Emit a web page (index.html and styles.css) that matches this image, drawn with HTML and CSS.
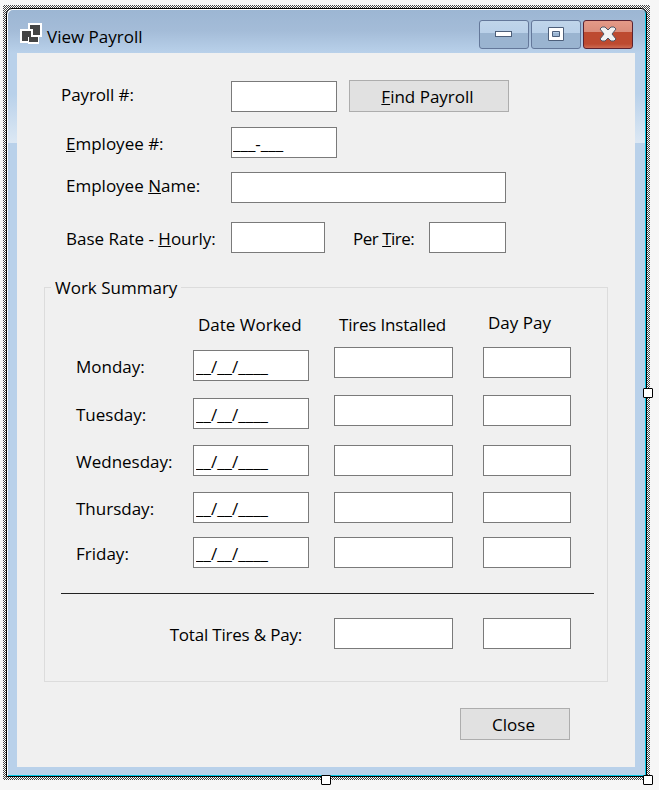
FILE: index.html
```html
<!DOCTYPE html>
<html lang="en">

<head>
    <meta charset="UTF-8">
    <title>View Payroll</title>
    <link rel="stylesheet" href="styles.css">
</head>

<body>
    <div class="selection">
        <div class="window">
            <div class="titlebar">
                <svg class="app-icon" width="22" height="21" viewBox="0 0 22 21">
                    <rect x="8" y="0" width="14" height="14" fill="#fff"/>
                    <rect x="10" y="2" width="10" height="10" fill="#444"/>
                    <rect x="0" y="6" width="13" height="14" fill="#fff"/>
                    <rect x="2" y="8" width="9" height="10" fill="#444"/>
                    <rect x="8" y="14" width="11" height="7" fill="#fff"/>
                    <rect x="9" y="14" width="9" height="5" fill="#444"/>
                </svg>
                <span class="title">View Payroll</span>
                <div class="caption-buttons">
                    <div class="caption-btn">
                        <svg width="18" height="8" viewBox="0 0 18 8"><rect x="0.5" y="1.5" width="16" height="5" fill="#fff" stroke="#4d5f7a"/></svg>
                    </div>
                    <div class="caption-btn">
                        <svg width="18" height="16" viewBox="0 0 18 16"><path d="M1.5 1.5h15v13h-15z M5.5 5.5v5h7v-5z" fill="#fff" fill-rule="evenodd" stroke="#4d5f7a"/></svg>
                    </div>
                    <div class="caption-btn close">
                        <svg width="18" height="16" viewBox="0 0 18 16"><path d="M1 3 3 1h3l3 3 3-3h3l2 2-4 5 4 5-2 2h-3l-3-3-3 3H3l-2-2 4-5z" fill="#f2f2f2" stroke="#4f5666"/></svg>
                    </div>
                </div>
            </div>

            <div class="client">
                <div class="row row-payroll">
                    <label class="lbl lbl-first">Payroll #:</label>
                    <input class="field w-106" type="text">
                    <button class="btn btn-find"><u>F</u>ind Payroll</button>
                </div>
                <div class="row row-employee">
                    <label class="lbl lbl-down"><u>E</u>mployee #:</label>
                    <input class="field w-106" type="text" value="___-___">
                </div>
                <div class="row row-name">
                    <label class="lbl lbl-up">Employee <u>N</u>ame:</label>
                    <input class="field w-275" type="text">
                </div>
                <div class="row row-rate">
                    <label class="lbl lbl-down">Base Rate - <u>H</u>ourly:</label>
                    <input class="field w-94" type="text">
                    <label class="lbl-tire lbl-down">Per <u>T</u>ire:</label>
                    <input class="field w-77" type="text">
                </div>

                <fieldset class="summary">
                    <legend>Work Summary</legend>
                    <div class="grid head-row">
                        <span></span>
                        <span class="col-head">Date Worked</span>
                        <span class="col-head tires-head">Tires Installed</span>
                        <span class="col-head day-pay">Day Pay</span>
                    </div>
                    <div class="grid day-row mon">
                        <span class="day-label">Monday:</span>
                        <input class="field date low" type="text" value="__/__/____">
                        <input class="field" type="text">
                        <input class="field" type="text">
                    </div>
                    <div class="grid day-row tue">
                        <span class="day-label">Tuesday:</span>
                        <input class="field date low" type="text" value="__/__/____">
                        <input class="field" type="text">
                        <input class="field" type="text">
                    </div>
                    <div class="grid day-row wed">
                        <span class="day-label">Wednesday:</span>
                        <input class="field date" type="text" value="__/__/____">
                        <input class="field" type="text">
                        <input class="field" type="text">
                    </div>
                    <div class="grid day-row thu">
                        <span class="day-label">Thursday:</span>
                        <input class="field date" type="text" value="__/__/____">
                        <input class="field" type="text">
                        <input class="field" type="text">
                    </div>
                    <div class="grid day-row fri">
                        <span class="day-label">Friday:</span>
                        <input class="field date" type="text" value="__/__/____">
                        <input class="field" type="text">
                        <input class="field" type="text">
                    </div>
                    <div class="divider"></div>
                    <div class="grid total-row">
                        <span class="total-label">Total Tires &amp; Pay:</span>
                        <input class="field" type="text">
                        <input class="field" type="text">
                    </div>
                </fieldset>

                <button class="btn btn-close">Close</button>
            </div>
        </div>
        <span class="handle handle-right"></span>
        <span class="handle handle-bottom"></span>
        <span class="handle handle-corner"></span>
    </div>
</body>

</html>
```

FILE: styles.css
```css
body {
    box-sizing: border-box;
    height: 790px;
    margin: 0;
    padding: 5px 0 0 3px;
    background-color: #f6f6f6;
    font-family: "Open Sans", "Noto Sans", sans-serif;
    font-size: 17px;
    color: #000;
}

/* designer selection frame */
.selection {
    position: relative;
    width: 641px;
    height: 769px;
    padding: 3px;
    background: repeating-conic-gradient(#444 0 25%, #fff 0 50%) 0 0 / 2px 2px;
}

.handle {
    position: absolute;
    width: 8px;
    height: 8px;
    background-color: #fff;
    border: 1px solid #000;
    border-radius: 1px;
}

.handle-right {
    left: 640px;
    top: 383px;
}

.handle-bottom {
    left: 318px;
    top: 770px;
}

.handle-corner {
    left: 640px;
    top: 770px;
}

.window {
    box-sizing: border-box;
    width: 641px;
    height: 769px;
    border: 1px solid #000;
    border-radius: 6px 6px 0 0;
    box-shadow: inset 1px 1px 0 #fff, inset -1px -1px 0 #00c8e6;
    padding: 1px 11px 9px 10px;
    background: linear-gradient(to bottom, #9cb6d3 0, #a4bcd8 22px, #b9d1ea 44px, #b9d1ea 85px, #dce8f4 134px, #b9d1ea 134px);
}

.titlebar {
    display: flex;
    align-items: center;
    height: 43px;
    margin-left: 1px;
}

.app-icon {
    margin: 4px 5px 0 2px;
}

.title {
    margin-top: 10px;
}

.caption-buttons {
    display: flex;
    gap: 2px;
    margin-left: auto;
    margin-top: 5px;
    margin-right: 2px;
}

.caption-btn {
    display: flex;
    align-items: center;
    justify-content: center;
    box-sizing: border-box;
    width: 50px;
    height: 29px;
    border: 1px solid #64789a;
    border-radius: 3px;
    background: linear-gradient(to bottom, #c0d5ea 0, #b9d0e8 44%, #9ab4d0 44%, #9ab4d0 100%);
}

.caption-btn.close {
    border-color: #5b2230;
    background: linear-gradient(to bottom, #e49a88 0, #da8d7b 40%, #bd4a30 40%, #bd4a30 85%, #cc6a52 100%);
}

.client {
    box-sizing: border-box;
    height: 714px;
    background-color: #f0f0f0;
    padding-top: 27px;
}

.row {
    display: flex;
    align-items: center;
}

.row-payroll {
    height: 32px;
    padding-left: 44px;
}

.row-employee {
    height: 31px;
    margin-top: 15px;
    padding-left: 49px;
}

.row-name {
    height: 31px;
    margin-top: 14px;
    padding-left: 49px;
}

.row-rate {
    height: 31px;
    margin-top: 19px;
    padding-left: 49px;
}

.lbl {
    width: 165px;
    white-space: nowrap;
}

.lbl-first {
    width: 170px;
    margin-bottom: 3px;
    letter-spacing: -0.1px;
}

.lbl-down {
    margin-top: 2px;
}

.lbl-up {
    margin-bottom: 5px;
}

.lbl-tire {
    width: 76px;
    margin-left: 28px;
    white-space: nowrap;
    letter-spacing: -0.5px;
}

.field {
    box-sizing: border-box;
    height: 31px;
    min-width: 0;
    border: 1px solid #7a7a7a;
    border-radius: 0;
    background-color: #fff;
    padding: 2px 1px 0;
    font-family: inherit;
    font-size: 17px;
    color: #000;
    outline: none;
}

.row-payroll .field {
    margin-top: 1px;
}

.w-106 {
    width: 106px;
}

.w-275 {
    width: 275px;
}

.w-94 {
    width: 94px;
}

.w-77 {
    width: 77px;
}

.btn {
    box-sizing: border-box;
    height: 32px;
    background-color: #e1e1e1;
    border: 1px solid #adadad;
    border-radius: 0;
    padding: 0 3px 0 0;
    font-family: inherit;
    font-size: 17px;
    color: #000;
}

.btn-find {
    width: 160px;
    margin-left: 12px;
}

.btn-close {
    display: block;
    width: 110px;
    margin: 26px 0 0 443px;
}

.summary {
    box-sizing: border-box;
    width: 564px;
    height: 406px;
    margin: 23px 0 0 27px;
    padding: 0 0 0 16px;
    border: 1px solid #dcdcdc;
    min-width: 0;
}

.summary legend {
    padding: 2px 4px 0;
    margin-left: -10px;
    line-height: 20px;
}

.grid {
    display: grid;
    grid-template-columns: 117px 116px 119px 88px;
    margin-left: 15px;
}

.grid > :nth-child(3) {
    margin-left: 25px;
    width: 119px;
}

.grid > :nth-child(4) {
    margin-left: 55px;
    width: 88px;
}

.day-row,
.total-row {
    height: 34px;
    align-items: start;
}

.head-row {
    height: 22px;
    margin-top: 15px;
}

.col-head {
    padding-left: 5px;
    white-space: nowrap;
}

.tires-head {
    letter-spacing: -0.2px;
}

.day-pay {
    margin-top: -2px;
}

.day-label {
    line-height: 31px;
    margin-top: 4px;
}

.low {
    margin-top: 3px;
}

.date {
    width: 116px;
    padding-left: 2px;
}

.mon {
    margin-top: 12px;
}

.tue {
    margin-top: 14px;
}

.wed {
    margin-top: 16px;
}

.thu {
    margin-top: 13px;
}

.fri {
    margin-top: 11px;
}

.wed .day-label,
.thu .day-label,
.fri .day-label {
    margin-top: 1px;
}

.divider {
    width: 533px;
    height: 1px;
    background-color: #222;
    margin-top: 22px;
}

.total-row {
    grid-template-columns: 233px 119px 88px;
    margin-top: 24px;
}

.total-row > :nth-child(2) {
    margin-left: 25px;
    width: 119px;
}

.total-row > :nth-child(3) {
    margin-left: 55px;
    width: 88px;
}

.total-label {
    text-align: right;
    padding-right: 7px;
    line-height: 31px;
    margin-top: 1px;
    letter-spacing: -0.2px;
}
```
